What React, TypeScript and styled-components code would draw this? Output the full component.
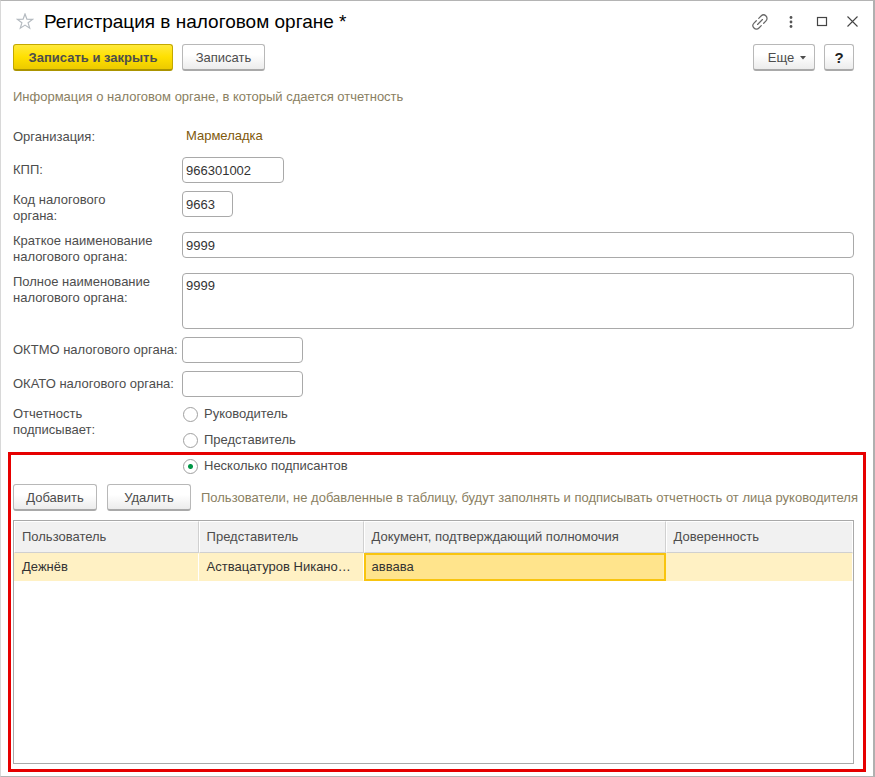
import React, { useState } from "react";
import styled, { createGlobalStyle, css } from "styled-components";

const GlobalStyle = createGlobalStyle`
  *, *::before, *::after { box-sizing: border-box; }
  body {
    margin: 0;
    background: #fff;
    color: #4d4d4d;
    font: 13px/16px "Liberation Sans", Arial, sans-serif;
  }
  button, input, textarea { font: inherit; color: inherit; }
`;

const Window = styled.main`
  display: flex;
  flex-direction: column;
  min-height: 100vh;
  padding: 0 19px 12px 12px;
  border: 1px solid #b4b4b4;
  border-left-color: #d8d8d8;
  border-right: 2px solid #b0b0b0;
`;

const TitleBar = styled.header`
  display: flex;
  align-items: center;
  height: 43px;
  padding-bottom: 2px;
`;

const Title = styled.h1`
  flex: 1;
  margin: 0 0 0 7px;
  font-size: 19px;
  line-height: 24px;
  font-weight: 400;
  color: #000;
`;

const IconButton = styled.button`
  display: grid;
  place-items: center;
  width: 24px;
  height: 24px;
  padding: 0;
  border: 0;
  background: none;
  color: #444;
`;

const WindowTools = styled.div`
  display: flex;
  gap: 7px;
  margin-right: -11px;
`;

const Toolbar = styled.div<{ $gap: number }>`
  display: flex;
  align-items: center;
  gap: ${(p) => p.$gap}px;
`;

const Spacer = styled.div`
  flex: 1;
`;

const Button = styled.button<{ $primary?: boolean; $width: number }>`
  display: flex;
  align-items: center;
  justify-content: center;
  gap: 6px;
  width: ${(p) => p.$width}px;
  height: 27px;
  padding: 1px 0 0;
  flex-shrink: 0;
  border: 1px solid #b8b8b8;
  border-bottom: 2px solid #a9a9a9;
  border-radius: 3px;
  background: linear-gradient(#fff 40%, #ececec);
  ${(p) => p.$primary && css`
    font-weight: 700;
    border-color: #c3a800;
    border-bottom-color: #ab9400;
    background: linear-gradient(#ffe93c, #ffe000 50%, #ecca00);
  `}
`;

const HelpButton = styled(Button)`
  font-size: 15px;
  font-weight: 700;
  color: #222;
`;

const MoreButton = styled(Button)`
  padding-left: 6px;
`;

const Hint = styled.p`
  margin: 0;
  color: #8a8062;
`;

const Intro = styled(Hint)`
  margin: 18px 0 19px;
`;

const Form = styled.form`
  display: flex;
  flex-direction: column;
  gap: 8px;
`;

const Row = styled.div<{ $center?: boolean }>`
  display: grid;
  grid-template-columns: 169px minmax(0, 1fr);
  align-items: ${(p) => (p.$center ? "center" : "start")};
`;

const labelStyle = css<{ $narrow?: boolean }>`
  max-width: ${(p) => (p.$narrow ? "140px" : "none")};
  padding-top: ${(p) => (p.$narrow ? "1px" : "0")};
  white-space: ${(p) => (p.$narrow ? "normal" : "nowrap")};
`;

const Label = styled.label`
  ${labelStyle}
`;

const Caption = styled.span`
  ${labelStyle}
`;

const Organization = styled.span`
  padding: 4px 4px 5px;
  color: #80590b;
`;

const fieldStyle = css`
  display: block;
  border: 1px solid #a9a9a9;
  border-radius: 4px;
  background: #fff;
  color: #333;
  outline: 0;
`;

const Field = styled.input<{ $width?: number }>`
  ${fieldStyle}
  width: ${(p) => (p.$width ? `${p.$width}px` : "100%")};
  height: 26px;
  padding: 0 3px;
`;

const Area = styled.textarea`
  ${fieldStyle}
  width: 100%;
  height: 56px;
  padding: 4px 3px;
  resize: none;
`;

const Choices = styled.div`
  display: flex;
  flex-direction: column;
  gap: 8px;
`;

const Choice = styled.label`
  display: flex;
  align-items: center;
  gap: 6px;
  height: 18px;
`;

const Radio = styled.input`
  appearance: none;
  width: 15px;
  height: 15px;
  margin: 0 0 0 1px;
  border: 1px solid #a0a0a0;
  border-radius: 50%;
  background: #fff;
  &:checked {
    background: radial-gradient(circle, #009646 2px, #fff 3px);
  }
`;

const Signers = styled.section`
  position: relative;
  flex: 1;
  display: flex;
  flex-direction: column;
  margin-top: 9px;
`;

const Highlight = styled.div`
  position: absolute;
  inset: -32px -12px -8px -5px;
  border: 3px solid #e60000;
  pointer-events: none;
`;

const SignersHint = styled(Hint)`
  white-space: nowrap;
`;

const TableBox = styled.div`
  flex: 1;
  margin-top: 9px;
  border: 1px solid #a9a9a9;
`;

const Table = styled.table`
  width: 100%;
  table-layout: fixed;
  border-collapse: separate;
  border-spacing: 0;
`;

const Col = styled.col<{ $width?: string }>`
  width: ${(p) => p.$width ?? "auto"};
`;

const HeadCell = styled.th`
  height: 32px;
  padding: 0 7px;
  border: 1px solid #fff;
  border-right-color: #d0d0d0;
  border-bottom-color: #d0d0d0;
  background: #f1f1f1;
  font-weight: 400;
  text-align: left;
  &:last-child { border-right-color: #fff; }
`;

const Cell = styled.td<{ $active?: boolean }>`
  height: 28px;
  padding: 0 7px;
  overflow: hidden;
  white-space: nowrap;
  text-overflow: ellipsis;
  color: #333;
  background: #fff1c4;
  border: 1px solid #fff1c4;
  border-right-color: #fff;
  ${(p) => p.$active && css`
    padding: 0 6px;
    border: 2px solid #f8c40f;
    background: #ffe48c;
  `}
`;

const StarIcon = () => (
  <svg width="18" height="18" viewBox="0 0 18 18" fill="none" stroke="#b4bac0" strokeWidth="1.2" aria-hidden="true">
    <path d="M9 1l1.900 5.200 5.600.2-4.400 3.400 1.600 5.400L9 12.100l-4.700 3.100 1.600-5.400L1.500 6.400l5.600-.2z" />
  </svg>
);

const LinkIcon = () => (
  <svg width="18" height="18" viewBox="0 0 18 18" fill="none" stroke="#666" strokeWidth="1.2" strokeLinecap="round" aria-hidden="true">
    <g transform="rotate(-45 9 9)">
      <path d="M7.300 5.500H4a3.500 3.500 0 0 0 0 7h3.300" />
      <path d="M10.700 5.500H14a3.500 3.500 0 0 1 0 7h-3.300" />
      <path d="M5.500 9h7" />
    </g>
  </svg>
);

const DotsIcon = () => (
  <svg width="14" height="14" viewBox="0 0 14 14" fill="#555" aria-hidden="true">
    <circle cx="7" cy="2.500" r="1.400" />
    <circle cx="7" cy="7" r="1.400" />
    <circle cx="7" cy="11.500" r="1.400" />
  </svg>
);

const MaximizeIcon = () => (
  <svg width="14" height="14" viewBox="0 0 14 14" fill="none" stroke="currentColor" strokeWidth="1.2" aria-hidden="true">
    <rect x="2.500" y="2.500" width="9" height="8" />
  </svg>
);

const CloseIcon = () => (
  <svg width="14" height="14" viewBox="0 0 14 14" stroke="currentColor" strokeWidth="1.1" aria-hidden="true">
    <path d="M1.500 1.500l10 10M11.500 1.500l-10 10" />
  </svg>
);

const CaretIcon = () => (
  <svg width="6" height="4" viewBox="0 0 6 4" fill="currentColor" aria-hidden="true">
    <path d="M0 0h6L3 3.500z" />
  </svg>
);

const signerKinds = ["Руководитель", "Представитель", "Несколько подписантов"];
const columns = ["Пользователь", "Представитель", "Документ, подтверждающий полномочия", "Доверенность"];

export default function App() {
  const [signer, setSigner] = useState(signerKinds[2]);

  return (
    <>
      <GlobalStyle />
      <Window>
        <TitleBar>
          <IconButton type="button" aria-label="В избранное"><StarIcon /></IconButton>
          <Title>Регистрация в налоговом органе *</Title>
          <WindowTools>
            <IconButton type="button" aria-label="Получить ссылку"><LinkIcon /></IconButton>
            <IconButton type="button" aria-label="Меню"><DotsIcon /></IconButton>
            <IconButton type="button" aria-label="Развернуть"><MaximizeIcon /></IconButton>
            <IconButton type="button" aria-label="Закрыть"><CloseIcon /></IconButton>
          </WindowTools>
        </TitleBar>

        <Toolbar $gap={9}>
          <Button type="button" $primary $width={160}>Записать и закрыть</Button>
          <Button type="button" $width={83}>Записать</Button>
          <Spacer />
          <MoreButton type="button" $width={62}>Еще <CaretIcon /></MoreButton>
          <HelpButton type="button" $width={30}>?</HelpButton>
        </Toolbar>

        <Intro>Информация о налоговом органе, в который сдается отчетность</Intro>

        <Form>
          <Row $center>
            <Caption>Организация:</Caption>
            <Organization>Мармеладка</Organization>
          </Row>
          <Row $center>
            <Label htmlFor="kpp">КПП:</Label>
            <Field id="kpp" $width={102} defaultValue="966301002" />
          </Row>
          <Row>
            <Label htmlFor="code" $narrow>Код налогового<br />органа:</Label>
            <Field id="code" $width={51} defaultValue="9663" />
          </Row>
          <Row>
            <Label htmlFor="short" $narrow>Краткое наименование налогового органа:</Label>
            <Field id="short" defaultValue="9999" />
          </Row>
          <Row>
            <Label htmlFor="full" $narrow>Полное наименование налогового органа:</Label>
            <Area id="full" defaultValue="9999" />
          </Row>
          <Row $center>
            <Label htmlFor="oktmo">ОКТМО налогового органа:</Label>
            <Field id="oktmo" $width={121} />
          </Row>
          <Row $center>
            <Label htmlFor="okato">ОКАТО налогового органа:</Label>
            <Field id="okato" $width={121} />
          </Row>
          <Row role="radiogroup" aria-labelledby="signer-label">
            <Caption id="signer-label" $narrow>Отчетность подписывает:</Caption>
            <Choices>
              {signerKinds.map((kind) => (
                <Choice key={kind}>
                  <Radio type="radio" name="signer" checked={signer === kind} onChange={() => setSigner(kind)} />
                  {kind}
                </Choice>
              ))}
            </Choices>
          </Row>
        </Form>

        <Signers>
          <Toolbar $gap={10}>
            <Button type="button" $width={84}>Добавить</Button>
            <Button type="button" $width={84}>Удалить</Button>
            <SignersHint>Пользователи, не добавленные в таблицу, будут заполнять и подписывать отчетность от лица руководителя</SignersHint>
          </Toolbar>
          <TableBox>
            <Table>
              <colgroup>
                <Col $width="22%" />
                <Col $width="165px" />
                <Col $width="36%" />
                <Col />
              </colgroup>
              <thead>
                <tr>{columns.map((name) => <HeadCell key={name} scope="col">{name}</HeadCell>)}</tr>
              </thead>
              <tbody>
                <tr>
                  <Cell>Дежнёв</Cell>
                  <Cell>Аствацатуров Никаноров</Cell>
                  <Cell $active>аввава</Cell>
                  <Cell />
                </tr>
              </tbody>
            </Table>
          </TableBox>
          <Highlight />
        </Signers>
      </Window>
    </>
  );
}
